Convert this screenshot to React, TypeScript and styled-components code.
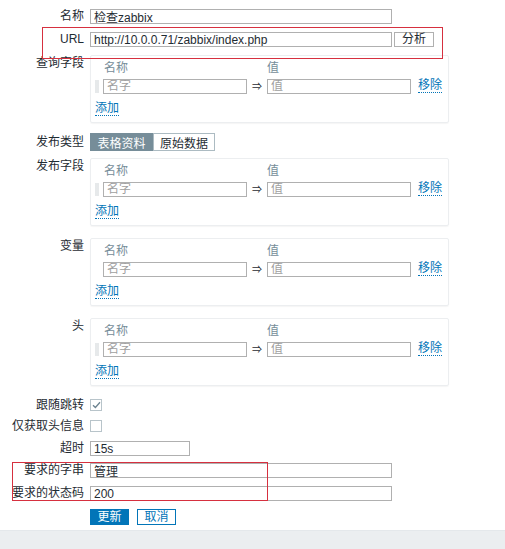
import React from 'react';
import styled, { createGlobalStyle } from 'styled-components';

const GlobalStyle = createGlobalStyle`
  html, body {
    margin: 0;
    padding: 0;
    background: #ebeef0;
  }
  body {
    font-family: "Liberation Sans", "Noto Sans CJK SC", sans-serif;
    font-size: 12px;
    color: #1f2c33;
  }
`;

type Pair = { name: string; value: string };

const Page = styled.div`
  width: 505px;
  height: 549px;
  display: flex;
  flex-direction: column;
`;

const Form = styled.div`
  position: relative;
  background: #ffffff;
  padding: 9px 0 5px 0;
  border-bottom: 1px solid #e4e8eb;
  margin-bottom: 4px;
  display: flex;
  flex-direction: column;
`;

const Footer = styled.div`
  flex: 1;
  background: #ebeef0;
`;

const Row = styled.div<{ $mt?: number }>`
  display: grid;
  grid-template-columns: 84px 1fr;
  column-gap: 6px;
  align-items: start;
  margin-top: ${(p) => p.$mt ?? 8}px;
`;

const Label = styled.div<{ $top?: number; $lh?: number }>`
  text-align: right;
  white-space: nowrap;
  line-height: ${(p) => p.$lh ?? 15}px;
  padding-top: ${(p) => p.$top ?? 0}px;
`;

const Field = styled.div`
  display: flex;
  align-items: center;
  gap: 2px;
`;

const TextInput = styled.input<{ $w: number }>`
  box-sizing: border-box;
  width: ${(p) => p.$w}px;
  height: 15px;
  margin: 0;
  padding: 0 3px;
  border: 1px solid #b0b0b0;
  background: #fff;
  font-family: inherit;
  font-size: 12px;
  color: #1f2c33;
  outline: none;
  &::placeholder {
    color: #a0a0a0;
  }
`;

const SmallButton = styled.button`
  box-sizing: border-box;
  height: 15px;
  width: 40px;
  margin: 0;
  padding: 0;
  border: 1px solid #b0b0b0;
  background: #fff;
  font-family: inherit;
  font-size: 12px;
  line-height: 13px;
  color: #1f2c33;
`;

const Panel = styled.div`
  box-sizing: border-box;
  width: 359px;
  height: 68px;
  padding: 3px 3px 0 3px;
  border: 1px solid #eceef0;
  border-radius: 2px;
  box-shadow: 0 1px 1px rgba(0, 0, 0, 0.04);
  display: grid;
  grid-template-columns: 9px 144px 20px 144px 1fr;
  grid-template-rows: 18px 16px 22px;
  row-gap: 1px;
  align-items: center;
`;

const Head = styled.div<{ $pl?: number }>`
  color: #768d99;
  padding-left: ${(p) => p.$pl ?? 0}px;
  line-height: 16px;
`;

const Handle = styled.div<{ $show: boolean }>`
  width: 4px;
  height: 13px;
  margin-left: 1px;
  visibility: ${(p) => (p.$show ? 'visible' : 'hidden')};
  background-image: radial-gradient(circle, #c9cfd2 0.6px, transparent 0.8px);
  background-size: 2px 2px;
`;

const Arrow = styled.div`
  text-align: center;
  font-size: 10px;
  line-height: 15px;
  color: #1f2c33;
`;

const LinkText = styled.a`
  color: #0275b8;
  text-decoration: none;
  border-bottom: 1px dotted #0275b8;
  line-height: 13px;
  cursor: pointer;
  justify-self: start;
`;

const AddLink = styled(LinkText)`
  grid-column: 1 / span 3;
  margin-left: 1px;
  align-self: end;
  margin-bottom: 1px;
`;

const RemoveLink = styled(LinkText)`
  margin-left: 7px;
`;

const Segmented = styled.div`
  display: flex;
  height: 18px;
`;

const Segment = styled.button<{ $active?: boolean }>`
  box-sizing: border-box;
  height: 18px;
  width: ${(p) => (p.$active ? 63 : 62)}px;
  margin: 0;
  padding: 0;
  border: 1px solid ${(p) => (p.$active ? '#768d99' : '#acbbc2')};
  background: ${(p) => (p.$active ? '#768d99' : '#ffffff')};
  color: ${(p) => (p.$active ? '#ffffff' : '#1f2c33')};
  font-family: inherit;
  font-size: 12px;
`;

const Check = styled.span`
  box-sizing: border-box;
  width: 12px;
  height: 12px;
  border: 1px solid #b8c4ca;
  background: #fff;
  display: flex;
  align-items: center;
  justify-content: center;
`;

const Actions = styled.div`
  display: flex;
  gap: 8px;
`;

const ActionButton = styled.button<{ $primary?: boolean }>`
  box-sizing: border-box;
  height: 16px;
  width: 39px;
  margin: 0;
  padding: 0;
  border: 1px solid #0275b8;
  background: ${(p) => (p.$primary ? '#0275b8' : '#ffffff')};
  color: ${(p) => (p.$primary ? '#ffffff' : '#0275b8')};
  font-family: inherit;
  font-size: 12px;
  line-height: 14px;
`;

const Annotation = styled.div<{ $x: number; $y: number; $w: number; $h: number }>`
  position: absolute;
  left: ${(p) => p.$x}px;
  top: ${(p) => p.$y}px;
  width: ${(p) => p.$w}px;
  height: ${(p) => p.$h}px;
  box-sizing: border-box;
  border: 1px solid #d6303f;
  pointer-events: none;
`;

const PairPanel = ({ rows, handle }: { rows: Pair[]; handle: boolean }) => (
  <Panel>
    <span />
    <Head $pl={1}>名称</Head>
    <span />
    <Head>值</Head>
    <span />
    {rows.map((r, i) => (
      <React.Fragment key={i}>
        <Handle $show={handle} />
        <TextInput $w={144} placeholder="名字" defaultValue={r.name} />
        <Arrow>⇒</Arrow>
        <TextInput $w={144} placeholder="值" defaultValue={r.value} />
        <RemoveLink>移除</RemoveLink>
      </React.Fragment>
    ))}
    <AddLink>添加</AddLink>
  </Panel>
);

const CheckMark = () => (
  <svg width="9" height="8" viewBox="0 0 9 8">
    <path d="M1 4.2 L3.4 6.5 L8 1.3" fill="none" stroke="#6c8390" strokeWidth="1.3" />
  </svg>
);

const empty: Pair[] = [{ name: '', value: '' }];

export default function App() {
  return (
    <Page>
      <GlobalStyle />
      <Form>
        <Row $mt={0}>
          <Label>名称</Label>
          <TextInput $w={302} defaultValue="检查zabbix" />
        </Row>
        <Row>
          <Label>URL</Label>
          <Field>
            <TextInput $w={302} defaultValue="http://10.0.0.71/zabbix/index.php" />
            <SmallButton>分析</SmallButton>
          </Field>
        </Row>
        <Row>
          <Label $top={1}>查询字段</Label>
          <PairPanel rows={empty} handle />
        </Row>
        <Row $mt={10}>
          <Label $top={2}>发布类型</Label>
          <Segmented>
            <Segment $active>表格资料</Segment>
            <Segment>原始数据</Segment>
          </Segmented>
        </Row>
        <Row $mt={7}>
          <Label $top={1}>发布字段</Label>
          <PairPanel rows={empty} handle />
        </Row>
        <Row $mt={12}>
          <Label $top={1}>变量</Label>
          <PairPanel rows={empty} handle={false} />
        </Row>
        <Row $mt={12}>
          <Label $top={1}>头</Label>
          <PairPanel rows={empty} handle />
        </Row>
        <Row $mt={13}>
          <Label $lh={12}>跟随跳转</Label>
          <Check>
            <CheckMark />
          </Check>
        </Row>
        <Row $mt={9}>
          <Label $lh={12}>仅获取头信息</Label>
          <Check />
        </Row>
        <Row $mt={9}>
          <Label>超时</Label>
          <TextInput $w={100} defaultValue="15s" />
        </Row>
        <Row $mt={7}>
          <Label>要求的字串</Label>
          <TextInput $w={302} defaultValue="管理" />
        </Row>
        <Row $mt={8}>
          <Label>要求的状态码</Label>
          <TextInput $w={302} defaultValue="200" />
        </Row>
        <Row $mt={8}>
          <span />
          <Actions>
            <ActionButton $primary>更新</ActionButton>
            <ActionButton>取消</ActionButton>
          </Actions>
        </Row>
        <Annotation $x={42} $y={27} $w={401} $h={32} />
        <Annotation $x={12} $y={462} $w={256} $h={39} />
      </Form>
      <Footer />
    </Page>
  );
}
